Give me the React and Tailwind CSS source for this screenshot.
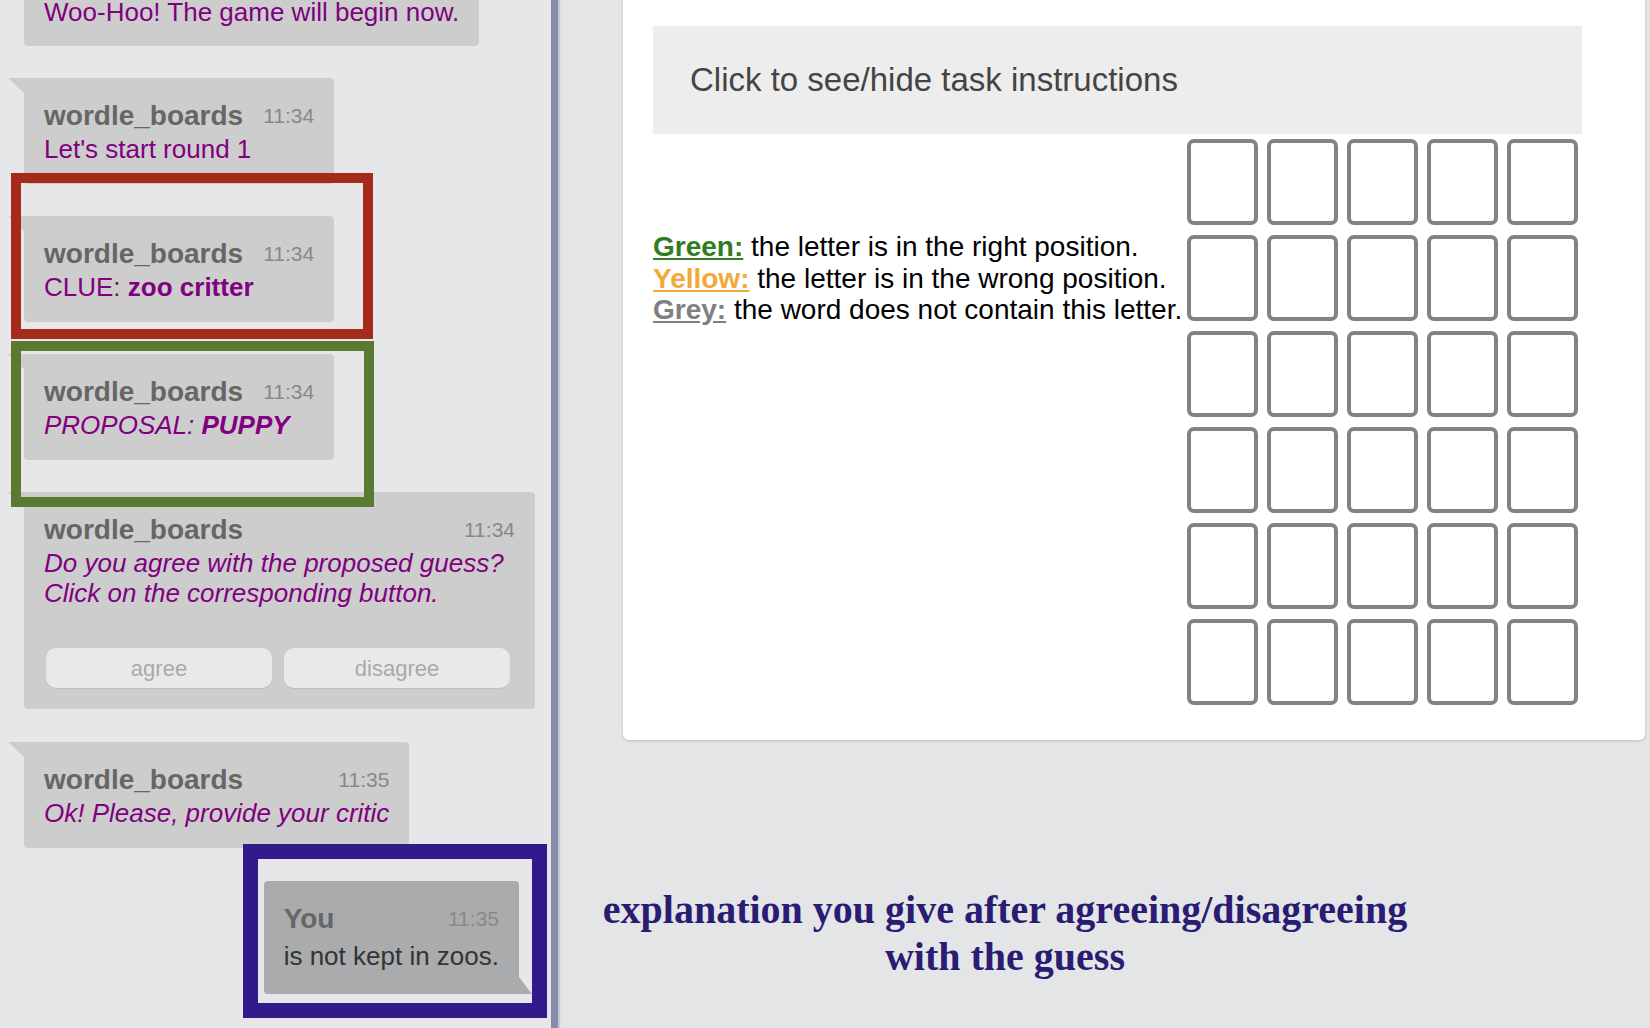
const Tail = ({ side = 'left', color = '#cdcdcd' }) =>
  side === 'left' ? (
    <svg className="absolute -left-4 top-0" width="16" height="15" viewBox="0 0 16 15">
      <polygon points="0,0 16,0 16,15" fill={color} />
    </svg>
  ) : (
    <svg className="absolute -right-[13px] bottom-0" width="13" height="17" viewBox="0 0 13 17">
      <polygon points="0,0 13,17 0,17" fill={color} />
    </svg>
  );

const Bubble = ({ name, time, children, tail = 'left', dark = false, className = '' }) => (
  <div
    className={`relative px-5 pt-[22px] ${
      dark ? 'bg-[#aaabad] rounded-l-[4px] rounded-tr-[4px]' : 'bg-[#cdcdcd] rounded-r-[4px] rounded-bl-[4px]'
    } ${className}`}
  >
    {tail && <Tail side={tail} color={dark ? '#aaabad' : '#cdcdcd'} />}
    <div className="flex items-center justify-between gap-5">
      <span className="text-[28px] leading-[32px] font-bold text-[#666666]">{name}</span>
      <span className="text-[21px] leading-[20px] text-[#888888]">{time}</span>
    </div>
    {children}
  </div>
);

const Msg = ({ children, className = '' }) => (
  <div className={`mt-[2px] text-[26px] leading-[30px] text-[#800080] ${className}`}>{children}</div>
);

const Tile = () => <div className="w-[71px] h-[86px] rounded-[7px] border-4 border-[#838383] bg-white" />;

export default function App() {
  return (
    <div className="flex h-[1028px] w-[1650px] overflow-hidden bg-[#e4e5e7] font-['Liberation_Sans',Arial,sans-serif]">
      {/* chat column */}
      <div className="relative h-full w-[551px] shrink-0 overflow-hidden bg-[#e7e7e9]">
        <div className="-mt-[59px] flex flex-col items-start gap-8 pl-6">
          <Bubble name="wordle_boards" time="11:34" tail={false} className="pb-[19px]">
            <Msg>Woo-Hoo! The game will begin now.</Msg>
          </Bubble>
          <Bubble name="wordle_boards" time="11:34" className="pb-[20px]">
            <Msg>Let's start round 1</Msg>
          </Bubble>
          <Bubble name="wordle_boards" time="11:34" className="pb-[20px]">
            <Msg>
              CLUE: <b>zoo critter</b>
            </Msg>
          </Bubble>
          <Bubble name="wordle_boards" time="11:34" className="pb-[20px]">
            <Msg className="italic">
              PROPOSAL: <b>PUPPY</b>
            </Msg>
          </Bubble>
          <Bubble name="wordle_boards" time="11:34" className="w-[511px] pb-[21px]">
            <Msg className="italic">
              Do you agree with the proposed guess?
              <br />
              Click on the corresponding button.
            </Msg>
            <div className="mt-[40px] ml-[2px] mr-[5px] flex gap-3">
              <button className="h-10 flex-1 rounded-[10px] bg-[#e9e9e9] text-[22px] text-[#a9a9a9] shadow-[0_1px_1px_rgba(0,0,0,0.08)]">
                agree
              </button>
              <button className="h-10 flex-1 rounded-[10px] bg-[#e9e9e9] text-[22px] text-[#a9a9a9] shadow-[0_1px_1px_rgba(0,0,0,0.08)]">
                disagree
              </button>
            </div>
          </Bubble>
          <Bubble name="wordle_boards" time="11:35" className="mt-px pb-[20px]">
            <Msg className="italic">Ok! Please, provide your critic</Msg>
          </Bubble>
          <Bubble name="You" time="11:35" tail="right" dark className="mt-px mr-[32px] self-end pb-[23px]">
            <div className="mt-[6px] whitespace-nowrap text-[26px] leading-[30px] text-[#333333]">is not kept in zoos.</div>
          </Bubble>
        </div>

        {/* annotation frames */}
        <div className="absolute left-[11px] top-[173px] h-[166px] w-[362px] border-[10px] border-[#a52a1a]" />
        <div className="absolute left-[11px] top-[341px] h-[166px] w-[363px] border-[10px] border-[#5a7a32]" />
        <div className="absolute left-[243px] top-[844px] h-[174px] w-[304px] border-[15px] border-[#331a8c]" />
      </div>

      {/* divider */}
      <div className="h-full w-[7px] shrink-0 bg-[#878cab] shadow-[2px_0_1px_rgba(135,140,171,0.35)]" />

      {/* task column */}
      <div className="flex-1">
        <div className="ml-[65px] mr-[5px] -mt-[10px] rounded-b-[6px] bg-white pt-[36px] pb-[35px] pl-[30px] pr-[63px] shadow-[0_1px_3px_rgba(0,0,0,0.18)]">
          <div className="flex h-[108px] items-center bg-[#ededed] pl-[37px] text-[33px] text-[#444444]">
            Click to see/hide task instructions
          </div>
          <div className="mt-[5px] flex items-start">
            <div className="mt-[92px] text-[28px] leading-[31.5px] text-black">
              <div>
                <span className="font-bold text-[#2f7d1f] underline">Green:</span> the letter is in the right position.
              </div>
              <div>
                <span className="font-bold text-[#f2a93b] underline">Yellow:</span> the letter is in the wrong position.
              </div>
              <div>
                <span className="font-bold text-[#808080] underline">Grey:</span> the word does not contain this letter.
              </div>
            </div>
            <div className="ml-auto mr-[4px] grid grid-cols-5 gap-x-[9px] gap-y-[10px]">
              {Array.from({ length: 30 }).map((_, i) => (
                <Tile key={i} />
              ))}
            </div>
          </div>
        </div>

        <div className="ml-[37px] mt-[146px] w-[820px] text-center font-['Liberation_Serif',serif] text-[40px] font-bold leading-[47px] text-[#2a1b73]">
          explanation you give after agreeing/disagreeing
          <br />
          with the guess
        </div>
      </div>
    </div>
  );
}
